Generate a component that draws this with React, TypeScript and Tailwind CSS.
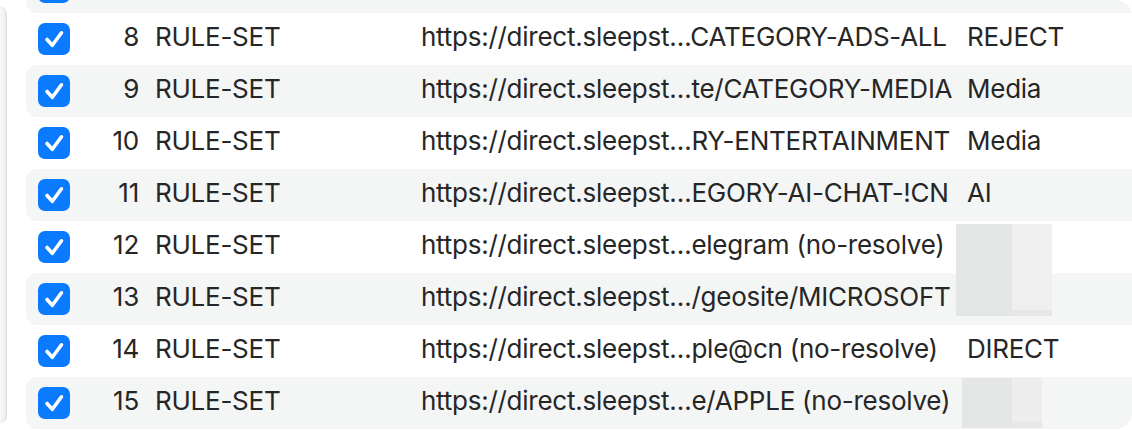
import React from "react";

type Rule = {
  id: number;
  type: string;
  url: string;
  policy: string;
};

// row 7 is scrolled almost out of view: only its checkbox edge shows
const rules: Rule[] = [
  { id: 7, type: "", url: "", policy: "" },
  { id: 8, type: "RULE-SET", url: "https://direct.sleepst…CATEGORY-ADS-ALL", policy: "REJECT" },
  { id: 9, type: "RULE-SET", url: "https://direct.sleepst…te/CATEGORY-MEDIA", policy: "Media" },
  { id: 10, type: "RULE-SET", url: "https://direct.sleepst…RY-ENTERTAINMENT", policy: "Media" },
  { id: 11, type: "RULE-SET", url: "https://direct.sleepst…EGORY-AI-CHAT-!CN", policy: "AI" },
  { id: 12, type: "RULE-SET", url: "https://direct.sleepst…elegram (no-resolve)", policy: "" },
  { id: 13, type: "RULE-SET", url: "https://direct.sleepst…/geosite/MICROSOFT", policy: "" },
  { id: 14, type: "RULE-SET", url: "https://direct.sleepst…ple@cn (no-resolve)", policy: "DIRECT" },
  { id: 15, type: "RULE-SET", url: "https://direct.sleepst…e/APPLE (no-resolve)", policy: "" },
];

const Check = () => (
  <div className="flex h-[32px] w-[32px] shrink-0 items-center justify-center rounded-[7px] bg-[#0a7aff]">
    <svg width="32" height="32" viewBox="0 0 32 32" fill="none">
      <path
        d="M9 16.5 L14.3 22.3 L23.5 9.8"
        stroke="white"
        strokeWidth="3.6"
        strokeLinecap="round"
        strokeLinejoin="round"
      />
    </svg>
  </div>
);

// blurred-out policy names (spans two rows for 12/13)
const Redacted = ({ big }: { big: boolean }) =>
  big ? (
    <div className="absolute left-[-11px] top-[3px] z-10 flex h-[92px] w-[96px]">
      <div className="w-[56px] bg-[#e4e5e5]" />
      <div className="flex w-[40px] flex-col">
        <div className="flex-1 bg-[#efefef]" />
        <div className="h-[6px] bg-[#e7e7e7]" />
      </div>
    </div>
  ) : (
    <div className="absolute left-[-5px] top-[1px] z-10 flex h-[50px] w-[80px]">
      <div className="w-[50px] bg-[#e4e5e5]" />
      <div className="flex w-[30px] flex-col">
        <div className="flex-1 bg-[#ededed]" />
        <div className="h-[6px] bg-[#e7e7e7]" />
      </div>
    </div>
  );

const App = () => {
  return (
    <div className="flex h-[430px] w-[1132px] overflow-hidden bg-white font-['Inter','Liberation_Sans',sans-serif] text-[26px] tracking-[-0.25px] text-[#262626]">
      {/* window edge on the left */}
      <div className="my-[7px] w-[7px] shrink-0 rounded-r-[7px] border-r border-[#dcdcdc] bg-gradient-to-r from-[#f8f8f8] to-[#ececec]" />
      <div className="ml-[19px] h-[429px] flex-1 overflow-hidden rounded-tr-[16px] rounded-br-[16px]">
        <div className="-mt-[39px] flex flex-col">
          {rules.map((r, i) => (
            <div
              key={r.id}
              className={
                "flex h-[52px] items-center rounded-l-[11px] pl-[12px] " +
                (i % 2 === 0 ? "bg-[#f4f5f5]" : "bg-white")
              }
            >
              <Check />
              {r.type && (
                <>
                  <div className="w-[69px] shrink-0 pb-[6px] text-right">{r.id}</div>
                  <div className="ml-[16px] w-[266px] shrink-0 pb-[6px]">{r.type}</div>
                  <div className="w-[546px] shrink-0 whitespace-nowrap pb-[6px]">{r.url}</div>
                  <div className="relative flex flex-1 items-center self-stretch whitespace-nowrap pb-[6px]">
                    {r.policy}
                    {r.id === 12 && <Redacted big />}
                    {r.id === 15 && <Redacted big={false} />}
                  </div>
                </>
              )}
            </div>
          ))}
        </div>
      </div>
    </div>
  );
};

export default App;
